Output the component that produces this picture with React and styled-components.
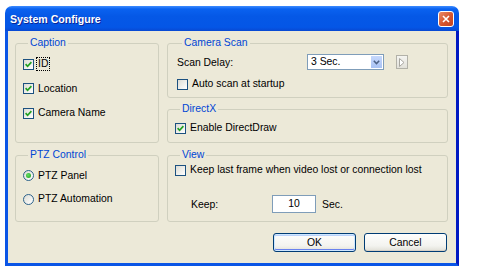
import styled, { createGlobalStyle } from 'styled-components';

const GlobalStyle = createGlobalStyle`
  html, body {
    margin: 0;
    padding: 0;
    background: #fff;
  }
  body {
    font-family: "Liberation Sans", Arial, sans-serif;
    font-size: 10.4px;
    color: #000;
  }
`;

const Window = styled.div`
  margin: 6px 0 0 5px;
  width: 454px;
  height: 260px;
  display: flex;
  flex-direction: column;
`;

const TitleBar = styled.div`
  flex: none;
  height: 25px;
  box-sizing: border-box;
  padding: 0 5px 0 5px;
  border-radius: 7px 7px 0 0;
  background: linear-gradient(#3d8bff 0, #0a62f0 3px, #0558e6 40%, #0456e6 85%, #0848d2 100%);
  display: flex;
  align-items: center;
  justify-content: space-between;
`;

const Title = styled.span`
  color: #fff;
  font-weight: bold;
  font-size: 10.6px;
  text-shadow: 1px 1px 0 #0b2596;
  padding-top: 1px;
`;

const CloseButton = styled.div`
  width: 16px;
  height: 16px;
  box-sizing: border-box;
  border: 1px solid #fff;
  border-radius: 3px;
  background: linear-gradient(135deg, #e98a68, #d5542e 55%, #c24421);
  display: flex;
  align-items: center;
  justify-content: center;
`;

const Body = styled.div`
  flex: 1;
  box-sizing: border-box;
  background: #ece9d8;
  border: 3px solid #0a55e6;
  border-top: none;
  border-right-color: #0019c2;
  padding: 6px 8px 0 7px;
  display: flex;
  flex-direction: column;
`;

const Columns = styled.div`
  display: grid;
  grid-template-columns: 144px 281px;
  column-gap: 8px;
`;

const Column = styled.div`
  display: flex;
  flex-direction: column;
`;

const Group = styled.fieldset`
  margin: ${p => p.$mt || 0}px 0 0 0;
  padding: ${p => p.$pad};
  min-width: 0;
  height: ${p => p.$h}px;
  box-sizing: border-box;
  border: 1px solid #d0d0bf;
  border-radius: 3px;
`;

const Legend = styled.legend`
  margin-left: 5px;
  padding: 0 2px;
  color: #0046d5;
  line-height: 12px;
`;

const CheckRow = styled.label`
  display: flex;
  align-items: center;
  gap: 3px;
  height: ${p => p.$h || 12}px;
  margin-top: ${p => p.$mt || 0}px;
  white-space: nowrap;
`;

const Box = styled.span`
  flex: none;
  width: 11px;
  height: 11px;
  box-sizing: border-box;
  border: 1px solid #1c5180;
  background: linear-gradient(135deg, #dcdcd4, #fff);
  display: flex;
  align-items: center;
  justify-content: center;
`;

const RadioCircle = styled(Box)`
  border-radius: 50%;
  border-color: #2c628b;
`;

const Dot = styled.span`
  width: 5px;
  height: 5px;
  border-radius: 50%;
  background: radial-gradient(circle at 40% 40%, #62e062, #1d9a1d);
`;

const Text = styled.span`
  line-height: 12px;
  padding: 0 1px;
  outline: ${p => (p.$focus ? '1px dotted #000' : 'none')};
  outline-offset: 0;
`;

const FieldRow = styled.div`
  display: flex;
  align-items: center;
  height: ${p => p.$h}px;
  margin-top: ${p => p.$mt || 0}px;
  padding-left: ${p => p.$pl || 0}px;
`;

const FieldLabel = styled.span`
  width: ${p => p.$w}px;
  flex: none;
`;

const Select = styled.div`
  width: 77px;
  height: 16px;
  box-sizing: border-box;
  border: 1px solid #7f9db9;
  background: #fff;
  display: flex;
  align-items: stretch;
`;

const SelectValue = styled.span`
  flex: 1;
  padding-left: 3px;
  line-height: 14px;
`;

const SelectButton = styled.span`
  width: 13px;
  box-sizing: border-box;
  border: 1px solid #fff;
  background: linear-gradient(#c6d8fc, #a9c2f3);
  display: flex;
  align-items: center;
  justify-content: center;
`;

const ArrowButton = styled.div`
  margin-left: 12px;
  width: 12px;
  height: 14px;
  box-sizing: border-box;
  border: 1px solid #b2b1a8;
  background: linear-gradient(#f4f4f0, #e2e1da);
  display: flex;
  align-items: center;
  justify-content: center;
`;

const NumberInput = styled.div`
  width: 44px;
  height: 18px;
  box-sizing: border-box;
  border: 1px solid #7f9db9;
  background: #fff;
  text-align: center;
  line-height: 16px;
  margin-right: 6px;
`;

const ButtonRow = styled.div`
  display: flex;
  justify-content: flex-end;
  gap: 8px;
  margin-top: 11px;
  padding-right: 1px;
`;

const Button = styled.div`
  width: 83px;
  height: 19px;
  box-sizing: border-box;
  border: 1px solid #003c74;
  border-radius: 3px;
  background: linear-gradient(#fefefd, #f3f3ef 70%, #e0dfd6);
  box-shadow: ${p =>
    p.$default
      ? 'inset 0 0 0 1px #cee7ff, inset 0 -1px 0 1px #6982ee, inset 0 1px 0 1px #b9d1fa'
      : 'inset 0 -1px 0 #d6d0c5'};
  display: flex;
  align-items: center;
  justify-content: center;
`;

const Check = () => (
  <svg width="7" height="7" viewBox="0 0 7 7">
    <path d="M0.6 3.2 L2.6 5.3 L6.4 1.2" fill="none" stroke="#21a121" strokeWidth="1.7" />
  </svg>
);

const CheckBox = ({ checked, label, focus, h, mt }) => (
  <CheckRow $h={h} $mt={mt}>
    <Box>{checked && <Check />}</Box>
    <Text $focus={focus}>{label}</Text>
  </CheckRow>
);

const Radio = ({ checked, label, h }) => (
  <CheckRow $h={h}>
    <RadioCircle>{checked && <Dot />}</RadioCircle>
    <Text>{label}</Text>
  </CheckRow>
);

function App() {
  return (
    <>
      <GlobalStyle />
      <Window>
        <TitleBar>
          <Title>System Configure</Title>
          <CloseButton>
            <svg width="8" height="8" viewBox="0 0 8 8">
              <path d="M1 1 L7 7 M7 1 L1 7" stroke="#fff" strokeWidth="1.6" />
            </svg>
          </CloseButton>
        </TitleBar>
        <Body>
          <Columns>
            <Column>
              <Group $h={106} $pad="3px 0 0 7px">
                <Legend>Caption</Legend>
                <CheckBox checked focus label="ID" h={24.5} />
                <CheckBox checked label="Location" h={24.5} />
                <CheckBox checked label="Camera Name" h={24.5} />
              </Group>
              <Group $h={73} $mt={6} $pad="3px 0 0 7px">
                <Legend>PTZ Control</Legend>
                <Radio checked label="PTZ Panel" h={23.5} />
                <Radio label="PTZ Automation" h={23.5} />
              </Group>
            </Column>
            <Column>
              <Group $h={61} $pad="0 0 0 9px">
                <Legend>Camera Scan</Legend>
                <FieldRow $h={16} $mt={5}>
                  <FieldLabel $w={130}>Scan Delay:</FieldLabel>
                  <Select>
                    <SelectValue>3 Sec.</SelectValue>
                    <SelectButton>
                      <svg width="7" height="5" viewBox="0 0 7 5">
                        <path d="M0.8 0.8 L3.5 3.6 L6.2 0.8" fill="none" stroke="#4d6185" strokeWidth="1.5" />
                      </svg>
                    </SelectButton>
                  </Select>
                  <ArrowButton>
                    <svg width="6" height="9" viewBox="0 0 6 9">
                      <path d="M0.5 0.5 L5 4.5 L0.5 8.5 Z" fill="#fff" stroke="#a7a6a0" strokeWidth="1" />
                    </svg>
                  </ArrowButton>
                </FieldRow>
                <CheckBox label="Auto scan at startup" mt={8} />
              </Group>
              <Group $h={40} $mt={5} $pad="7px 0 0 7px">
                <Legend>DirectX</Legend>
                <CheckBox checked label="Enable DirectDraw" />
              </Group>
              <Group $h={73} $mt={6} $pad="3px 0 0 7px">
                <Legend>View</Legend>
                <CheckBox label="Keep last frame when video lost or connection lost" />
                <FieldRow $h={18} $mt={19} $pl={16}>
                  <FieldLabel $w={81}>Keep:</FieldLabel>
                  <NumberInput>10</NumberInput>
                  <span>Sec.</span>
                </FieldRow>
              </Group>
            </Column>
          </Columns>
          <ButtonRow>
            <Button $default>OK</Button>
            <Button>Cancel</Button>
          </ButtonRow>
        </Body>
      </Window>
    </>
  );
}

export default App;
